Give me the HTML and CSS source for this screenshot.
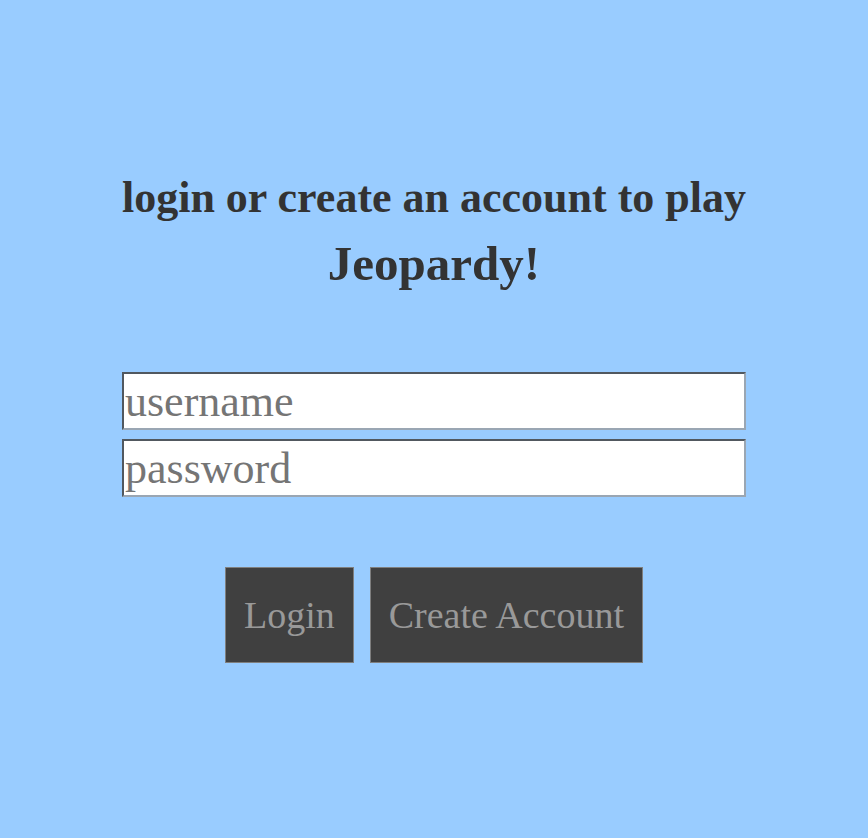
FILE: index.html
```html
<!DOCTYPE html>
<html>
<head>
<meta charset="utf-8">
<link rel="stylesheet" href="styles.css">
</head>
<body>
<div class="wrap">
  <h1 class="title">login or create an account to play <span class="brand">Jeopardy!</span></h1>
  <form class="form">
    <input class="field" type="text" placeholder="username">
    <input class="field" type="password" placeholder="password">
    <div class="actions">
      <button type="button" class="btn">Login</button>
      <button type="button" class="btn">Create Account</button>
    </div>
  </form>
</div>
</body>
</html>
```
FILE: styles.css
```css
html, body {
  margin: 0;
  padding: 0;
  background: #99ccff;
  height: 100%;
}
body {
  font-family: "Liberation Serif", "Times New Roman", serif;
}
.wrap {
  width: 624px;
  margin: 0 auto;
  padding-top: 164px;
}
.title {
  margin: 0 -12px;
  font-size: 44px;
  line-height: 68px;
  font-weight: bold;
  color: #333333;
  text-align: center;
}
.brand {
  font-size: 49px;
  line-height: 40px;
}
.form {
  margin-top: 72px;
  display: flex;
  flex-direction: column;
  gap: 9px;
}
.field {
  box-sizing: border-box;
  width: 624px;
  height: 58px;
  margin: 0;
  padding: 0 1px;
  font-family: "Liberation Serif", "Times New Roman", serif;
  font-size: 44px;
  border: 2px inset #9aa6b3;
  background: #fff;
  color: #333;
}
.field::placeholder {
  color: #757575;
}
.actions {
  margin-top: 61px;
  display: flex;
  justify-content: center;
  gap: 16px;
}
.btn {
  box-sizing: border-box;
  height: 96px;
  padding: 0 18px;
  background: #404040;
  color: #999999;
  border: 1px solid #7f7f7f;
  font-family: "Liberation Serif", "Times New Roman", serif;
  font-size: 38px;
}
```
